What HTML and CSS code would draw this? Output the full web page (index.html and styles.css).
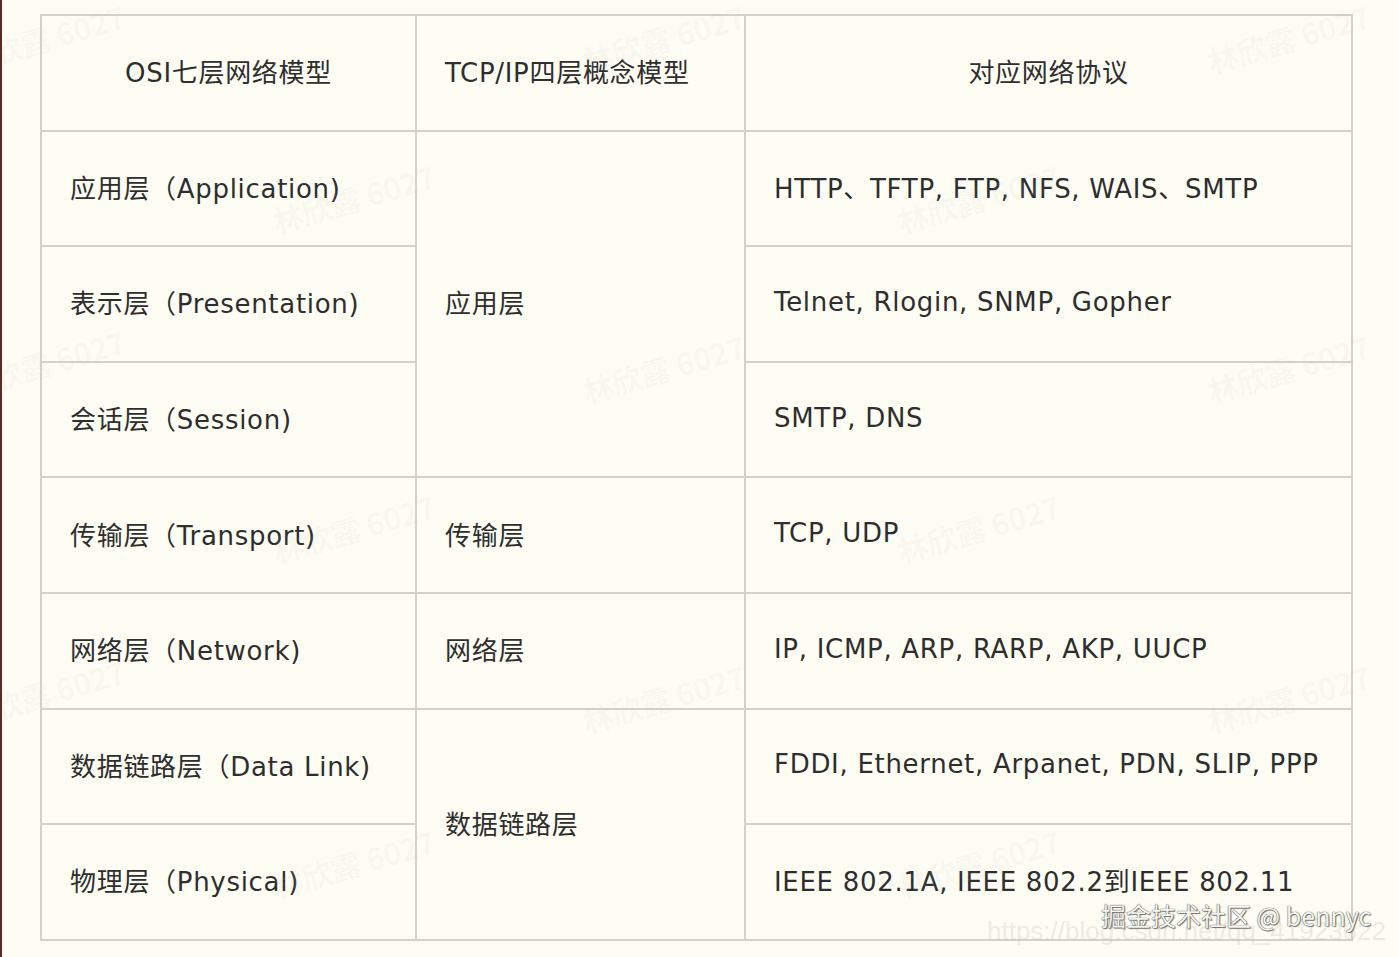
FILE: index.html
```html
<!DOCTYPE html>
<html lang="zh">
<head>
<meta charset="utf-8">
<title>OSI 七层模型</title>
<link rel="stylesheet" href="styles.css">
</head>
<body>
<div class="page">
  <table class="osi">
    <colgroup>
      <col class="c1"><col class="c2"><col class="c3">
    </colgroup>
    <tr>
      <th>OSI七层网络模型</th>
      <th class="left">TCP/IP四层概念模型</th>
      <th>对应网络协议</th>
    </tr>
    <tr>
      <td>应用层（Application)</td>
      <td rowspan="3">应用层</td>
      <td>HTTP、TFTP, FTP, NFS, WAIS、SMTP</td>
    </tr>
    <tr>
      <td>表示层（Presentation)</td>
      <td>Telnet, Rlogin, SNMP, Gopher</td>
    </tr>
    <tr>
      <td>会话层（Session)</td>
      <td>SMTP, DNS</td>
    </tr>
    <tr>
      <td>传输层（Transport)</td>
      <td>传输层</td>
      <td>TCP, UDP</td>
    </tr>
    <tr>
      <td>网络层（Network)</td>
      <td>网络层</td>
      <td>IP, ICMP, ARP, RARP, AKP, UUCP</td>
    </tr>
    <tr>
      <td>数据链路层（Data Link)</td>
      <td rowspan="2">数据链路层</td>
      <td>FDDI, Ethernet, Arpanet, PDN, SLIP, PPP</td>
    </tr>
    <tr>
      <td>物理层（Physical)</td>
      <td>IEEE 802.1A, IEEE 802.2到IEEE 802.11</td>
    </tr>
  </table>

  <div class="marks" aria-hidden="true">
    <span class="wm" style="left:-45px;top:0px">林欣露 6027</span>
    <span class="wm" style="left:575px;top:0px">林欣露 6027</span>
    <span class="wm" style="left:1200px;top:0px">林欣露 6027</span>
    <span class="wm" style="left:265px;top:160px">林欣露 6027</span>
    <span class="wm" style="left:890px;top:160px">林欣露 6027</span>
    <span class="wm" style="left:-45px;top:325px">林欣露 6027</span>
    <span class="wm" style="left:575px;top:330px">林欣露 6027</span>
    <span class="wm" style="left:1200px;top:330px">林欣露 6027</span>
    <span class="wm" style="left:265px;top:490px">林欣露 6027</span>
    <span class="wm" style="left:890px;top:490px">林欣露 6027</span>
    <span class="wm" style="left:-45px;top:655px">林欣露 6027</span>
    <span class="wm" style="left:575px;top:660px">林欣露 6027</span>
    <span class="wm" style="left:1200px;top:660px">林欣露 6027</span>
    <span class="wm" style="left:265px;top:825px">林欣露 6027</span>
    <span class="wm" style="left:890px;top:825px">林欣露 6027</span>
    <span class="url">https://blog.csdn.net/qq_41923622</span>
    <span class="juejin">掘金技术社区 @ bennyc</span>
  </div>
</div>
</body>
</html>
```

FILE: styles.css
```css
html, body {
  margin: 0;
  padding: 0;
  background: #fdfdf4;
}

.page {
  position: relative;
  box-sizing: border-box;
  width: 1399px;
  height: 957px;
  border-left: 2px solid #5b2b24;
  padding: 14px 0 0 38px;
  overflow: hidden;
  font-family: "DejaVu Sans", "Noto Sans CJK SC", sans-serif;
  color: #2e2e2e;
}

.osi {
  border-collapse: collapse;
  table-layout: fixed;
  width: 1311px;
  font-size: 26px;
  letter-spacing: 0.7px;
}

.osi col.c1 { width: 375px; }
.osi col.c2 { width: 329px; }
.osi col.c3 { width: 607px; }

.osi tr { height: 115.6px; }

.osi th,
.osi td {
  border: 2px solid #d2d2ca;
  padding: 0 28px 4px;
  vertical-align: middle;
  white-space: nowrap;
  font-weight: normal;
}

.osi th { text-align: center; }
.osi th.left { text-align: left; }
.osi td { text-align: left; }

.marks {
  position: absolute;
  inset: 0;
  pointer-events: none;
}

.wm {
  position: absolute;
  font-family: "Noto Sans CJK SC", sans-serif;
  font-weight: bold;
  font-size: 30px;
  color: rgba(190, 190, 180, 0.09);
  transform: rotate(-16deg);
  transform-origin: left top;
  margin-top: 40px;
  white-space: nowrap;
}

.url {
  position: absolute;
  left: 985px;
  top: 916px;
  font-family: "Liberation Sans", sans-serif;
  font-size: 26px;
  color: rgba(190, 190, 185, 0.3);
  white-space: nowrap;
}

.juejin {
  position: absolute;
  left: 1099px;
  top: 897px;
  font-family: "Noto Sans CJK SC", sans-serif;
  font-size: 25px;
  color: #f4f4f0;
  white-space: nowrap;
  text-shadow: 0 0 1px #555, 0 0 1px #555, 1px 1px 1px #777;
}
```
